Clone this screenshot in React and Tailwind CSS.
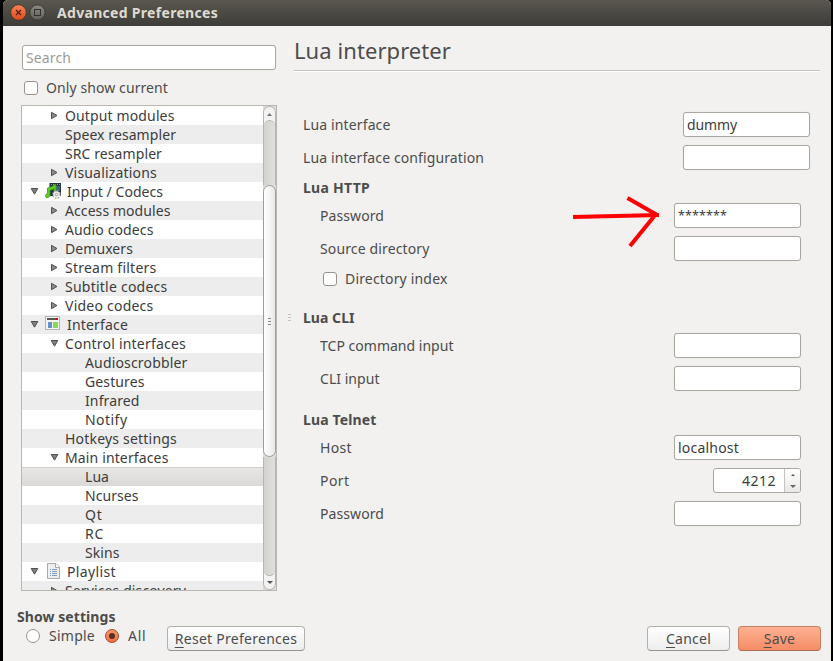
import { useLayoutEffect, useRef } from "react";

// Text label whose tracking is computed so that it fills the given width.
function T({ w, children, className = "" }) {
  const ref = useRef(null);
  useLayoutEffect(() => {
    const el = ref.current;
    el.style.letterSpacing = "0px";
    const natural = el.getBoundingClientRect().width;
    el.style.letterSpacing = `${(w - natural) / el.textContent.length}px`;
  }, [w]);
  return (
    <span ref={ref} className={`inline-block shrink-0 whitespace-pre ${className}`}>
      {children}
    </span>
  );
}

const rows = [
  [1, "right", "Output modules", 109.5],
  [1, "", "Speex resampler", 111],
  [1, "", "SRC resampler", 97],
  [1, "right", "Visualizations", 92],
  [0, "down", "Input / Codecs", 96, "codecs"],
  [1, "right", "Access modules", 105.5],
  [1, "right", "Audio codecs", 88.5],
  [1, "right", "Demuxers", 68],
  [1, "right", "Stream filters", 91.5],
  [1, "right", "Subtitle codecs", 102.5],
  [1, "right", "Video codecs", 88.5],
  [0, "down", "Interface", 61, "interface"],
  [1, "down", "Control interfaces", 121],
  [2, "", "Audioscrobbler", 102.5],
  [2, "", "Gestures", 59.5],
  [2, "", "Infrared", 54.5],
  [2, "", "Notify", 42.5],
  [1, "", "Hotkeys settings", 112],
  [1, "down", "Main interfaces", 103.5],
  [2, "", "Lua", 24],
  [2, "", "Ncurses", 53.5],
  [2, "", "Qt", 17.5],
  [2, "", "RC", 19],
  [2, "", "Skins", 34.5],
  [0, "down", "Playlist", 49, "playlist"],
  [1, "right", "Services discovery", 121],
];

function Arrow({ dir }) {
  return (
    <svg width="10" height="9" viewBox="0 0 10 9" className="shrink-0">
      {dir === "right" && <path d="M2.5 1.3 L8 4.5 L2.5 7.7 Z" fill="#8a8a88" stroke="#52524f" />}
      {dir === "down" && <path d="M2.2 1.5 H8.8 L5.5 7.2 Z" fill="#80807d" stroke="#50504d" />}
    </svg>
  );
}

function RowIcon({ name }) {
  if (name === "codecs")
    return (
      <svg width="16" height="16" viewBox="0 0 16 16">
        <rect x="4.5" y="0" width="11.5" height="13" fill="#26323d" />
        <path d="M6 1.500h9" stroke="#8f9fac" strokeDasharray="1 1" />
        <rect x="9" y="3" width="6" height="5" fill="#45618c" />
        <path d="M2.500 5 C5 4.500 8 3.500 9.500 1.500 H11 V11 H9 V5.500 C8 6.500 6.500 7 5 7.200 V12.500 C4.500 15 .6 15.500 .5 13.200 C.5 11.500 1.500 10.700 2.500 10.500Z" fill="#5fd01e" stroke="#3a9a13" strokeWidth=".8" />
        <circle cx="11.500" cy="11.500" r="3.600" fill="none" stroke="#9b9d98" strokeWidth="1.600" strokeDasharray="1.600 1.200" />
        <circle cx="11.500" cy="11.500" r="3.300" fill="#eeeeec" />
        <circle cx="11.500" cy="11.500" r="1.200" fill="#fff" stroke="#8d8f8a" strokeWidth=".9" />
      </svg>
    );
  if (name === "interface")
    return (
      <svg width="16" height="16" viewBox="0 0 16 16">
        <rect x=".5" y=".5" width="14" height="13" fill="#f3f3f1" stroke="#b5b6b1" />
        <path d="M2 3h9" stroke="#555753" strokeWidth="2" />
        <path d="M11 3h2" stroke="#e00" strokeWidth="2" />
        <path d="M3 7h4M3 9h4M3 11h4" stroke="#3a71b8" strokeWidth="1.300" />
        <path d="M8 7h5M8 9h5M8 11h5" stroke="#6bd01f" strokeWidth="1.400" />
      </svg>
    );
  return (
    <svg width="16" height="16" viewBox="0 0 16 16">
      <path d="M2.500 .5h8.500l3.500 3.500v11.500h-12z" fill="#eeeeec" stroke="#a9aaa6" />
      <path d="M10.500 .5v4h4" fill="#fff" stroke="#a9aaa6" />
      <path d="M5 6.500h1M5 8.500h1M5 10.500h1M5 12.500h1M7 6.500h5M7 8.500h5M7 10.500h5M7 12.500h5" stroke="#7d9cc4" />
    </svg>
  );
}

function TreeRow({ row, index }) {
  const [level, dir, label, width, icon] = row;
  const bg =
    label === "Lua"
      ? "bg-linear-to-b from-[#e9e8e7] to-[#dad9d7] shadow-[inset_0_1px_0_#d0cfcc]"
      : index % 2
        ? "bg-[#ededed]"
        : "bg-white";
  const pad = level === 0 ? "pl-[7px]" : level === 1 ? "pl-[27px]" : "pl-[47px]";
  return (
    <div className={`flex h-[19px] shrink-0 items-center ${bg} ${pad}`}>
      <Arrow dir={dir} />
      {icon && (
        <span className="mb-px ml-1.5 -mr-0.5 shrink-0">
          <RowIcon name={icon} />
        </span>
      )}
      <T w={width} className={icon ? "ml-2 text-[#3c3c3c]" : "ml-1.5 text-[#3c3c3c]"}>
        {label}
      </T>
    </div>
  );
}

function Grip({ className }) {
  return (
    <div className={`flex flex-col gap-[2px] ${className}`}>
      <i className="h-px w-[3px] bg-current" />
      <i className="h-px w-[3px] bg-current" />
      <i className="h-px w-[3px] bg-current" />
    </div>
  );
}

function ScrollBar() {
  return (
    <div className="flex w-[13px] flex-col bg-[#dddcda]">
      <div className="flex h-[79px] flex-col rounded-t-[7px] border border-b-0 border-[#b7b5b1] bg-linear-to-r from-[#d3d2cf] to-[#e0dfdd]">
        <div className="flex h-[18px] items-center justify-center rounded-t-[6px] bg-[#f3f2f1]">
          <svg width="5" height="3" className="mb-[3px]"><path d="M0 3 L2.500 0 L5 3Z" fill="#777" /></svg>
        </div>
        <div className="-mt-[5px] flex-1 rounded-t-[7px] border-t border-[#b7b5b1] bg-linear-to-r from-[#d3d2cf] to-[#e0dfdd]" />
      </div>
      <div className="flex h-[272px] items-center justify-center rounded-[7px] border border-[#9f9d99] bg-linear-to-r from-white to-[#e9e8e6]">
        <Grip className="text-[#8b8986]" />
      </div>
      <div className="flex flex-1 flex-col rounded-b-[7px] border border-t-0 border-[#b7b5b1] bg-[#f3f2f1]">
        <div className="flex-1 rounded-b-[7px] border-b border-[#b7b5b1] bg-linear-to-r from-[#d3d2cf] to-[#e0dfdd]" />
        <div className="flex h-[13px] items-center justify-center">
          <svg width="6" height="3"><path d="M0 0 L3 3 L6 0Z" fill="#555" /></svg>
        </div>
      </div>
    </div>
  );
}

function Field({ w, children, className = "" }) {
  return (
    <div className={`flex h-[25px] w-[127px] shrink-0 items-center rounded-[3px] border border-[#aaa7a1] bg-white pl-[3px] shadow-[0_0_1px_#d8d7d4] ${className}`}>
      {children && <T w={w}>{children}</T>}
    </div>
  );
}

function Check() {
  return <span className="h-[14px] w-[14px] shrink-0 rounded-[3px] border border-[#96948f] bg-white" />;
}

function Heading({ w, children, className = "" }) {
  return (
    <div className={`flex items-center pl-[9px] font-bold ${className}`}>
      <T w={w}>{children}</T>
    </div>
  );
}

function FormRow({ label, w, children, className = "pl-[26px] pr-[19px]" }) {
  return (
    <div className={`mb-2 flex h-[25px] items-center justify-between ${className}`}>
      <T w={w}>{label}</T>
      {children}
    </div>
  );
}

function Button({ first, rest, w, className }) {
  return (
    <button className={`flex h-[25px] items-center justify-center rounded-[4px] border pb-px ${className}`}>
      <T w={w}>
        <span className="underline decoration-1 underline-offset-[3px]">{first}</span>
        {rest}
      </T>
    </button>
  );
}

const plainButton = "border-[#b3b0aa] border-b-[#98958f] bg-linear-to-b from-white to-[#eeeded]";

export default function App() {
  return (
    <div className="flex h-[661px] w-[833px] overflow-hidden bg-black pr-[2px] pl-[3px] font-['Noto_Sans','Open_Sans',sans-serif] text-[14px] leading-[19px] text-[#4c4c4c]">
      <div className="flex flex-1 flex-col overflow-hidden rounded-t-[5px] bg-[#f2f1ef]">
        <header className="flex h-[26px] shrink-0 items-center bg-linear-to-b from-[#5a574e] to-[#3d3c38] pl-[7px]">
          <svg width="36" height="18" viewBox="0 0 36 18">
            <defs>
              <linearGradient id="close" x2="0" y2="1">
                <stop stopColor="#f78457" />
                <stop offset="1" stopColor="#df481b" />
              </linearGradient>
              <linearGradient id="max" x2="0" y2="1">
                <stop stopColor="#8b8980" />
                <stop offset="1" stopColor="#62605a" />
              </linearGradient>
            </defs>
            <circle cx="8.500" cy="8.500" r="7.800" fill="url(#close)" stroke="#34332e" strokeWidth=".8" />
            <path d="M6 6l5 5M11 6l-5 5" stroke="#4c2010" strokeWidth="1.200" />
            <circle cx="27.500" cy="8.500" r="7.600" fill="url(#max)" stroke="#34332e" strokeWidth=".8" />
            <rect x="24.500" y="5.500" width="6" height="6" fill="none" stroke="#33322e" />
          </svg>
          <T w={161} className="mb-[2px] ml-[11px] font-bold text-[#dfdbd2]">Advanced Preferences</T>
        </header>

        <main className="flex h-[565px] shrink-0">
          <section className="ml-[18px] flex w-[256px] shrink-0 flex-col pt-[19px]">
            <Field w={45} className="mx-px w-[254px] text-[#9c9a97]">
              Search
            </Field>
            <label className="mt-2 flex h-[20px] items-center gap-2 pl-[3px]">
              <Check />
              <T w={122} className="mb-[2px]">Only show current</T>
            </label>
            <div className="mt-[7px] flex h-[486px] overflow-hidden border border-[#b9b7b2] bg-white">
              <div className="flex flex-1 flex-col overflow-hidden">
                {rows.map((row, i) => (
                  <TreeRow key={row[2]} row={row} index={i} />
                ))}
              </div>
              <ScrollBar />
            </div>
          </section>

          <div className="flex w-[17px] shrink-0 justify-center pt-[288px] pl-[7px]">
            <Grip className="text-[#c5c3bf]" />
          </div>

          <section className="flex w-[526px] flex-col">
            <h1 className="flex h-[45px] shrink-0 items-center border-b border-[#c4c2be] pt-[3px] text-[22px] leading-[28px] shadow-[0_1px_0_white]">
              <T w={157}>Lua interpreter</T>
            </h1>
            <div className="pt-[41px]">
              <FormRow label="Lua interface" w={87.5} className="pr-[10px] pl-[9px]">
                <Field w={50} className="text-[#3c3c3c]">dummy</Field>
              </FormRow>
              <FormRow label="Lua interface configuration" w={181} className="pr-[10px] pl-[9px]">
                <Field />
              </FormRow>
              <Heading w={67} className="mb-[7px] h-[18px]">Lua HTTP</Heading>
              <FormRow label="Password" w={64}>
                <Field w={49} className="text-[12.5px] text-[#3c3c3c]">*******</Field>
              </FormRow>
              <FormRow label="Source directory" w={109.5}>
                <Field />
              </FormRow>
              <label className="flex h-[20px] items-center gap-2 pl-[29px]">
                <Check />
                <T w={102.5} className="mb-[2px]">Directory index</T>
              </label>
              <Heading w={51.5} className="mt-[18px] mb-[6px] h-[20px]">Lua CLI</Heading>
              <FormRow label="TCP command input" w={133.5}>
                <Field />
              </FormRow>
              <FormRow label="CLI input" w={59.5}>
                <Field />
              </FormRow>
              <Heading w={73.5} className="mt-[18px] mb-[6px] h-[20px]">Lua Telnet</Heading>
              <FormRow label="Host" w={32}>
                <Field w={61} className="text-[#3c3c3c]">localhost</Field>
              </FormRow>
              <FormRow label="Port" w={29.5}>
                <div className="flex h-[25px] w-[88px] overflow-hidden rounded-[3px] border border-[#aaa7a1] bg-white text-[#3c3c3c]">
                  <div className="flex flex-1 items-center justify-end pr-[8px]">
                    <T w={34}>4212</T>
                  </div>
                  <div className="flex w-[16px] flex-col items-center justify-between border-l border-[#c5c3bf] bg-linear-to-b from-white to-[#e9e8e6] pt-[5px] pb-[4px]">
                    <svg width="4" height="2"><path d="M0 2 L2 0 L4 2Z" fill="#555" /></svg>
                    <svg width="6" height="3"><path d="M0 0 L3 3 L6 0Z" fill="#666" /></svg>
                  </div>
                </div>
              </FormRow>
              <FormRow label="Password" w={64}>
                <Field />
              </FormRow>
            </div>
          </section>
        </main>

        <footer className="flex flex-1 pr-[10px] pl-[14px]">
          <div className="flex w-[150px] flex-col pt-[16px]">
            <T w={98.5} className="self-start font-bold">Show settings</T>
            <div className="flex h-[20px] items-center pl-[9px]">
              <span className="h-[14px] w-[14px] rounded-full border border-[#96948f] bg-white" />
              <T w={46} className="mb-px ml-[9px]">Simple</T>
              <span className="ml-[10px] flex h-[14px] w-[14px] items-center justify-center rounded-full border border-[#a5492b] bg-linear-to-b from-[#f9966d] to-[#ee6f43]">
                <i className="h-[6px] w-[6px] rounded-full bg-[#5a3022]" />
              </span>
              <T w={18.5} className="mb-px ml-[9px]">All</T>
            </div>
          </div>
          <div className="flex flex-1 pt-[35px]">
            <Button first="R" rest="eset Preferences" w={122.5} className={`w-[138px] ${plainButton}`} />
            <div className="flex-1" />
            <Button first="C" rest="ancel" w={45} className={`mr-2 w-[83px] ${plainButton}`} />
            <Button
              first="S"
              rest="ave"
              w={31.5}
              className="w-[83px] border-[#c38166] border-b-[#a96f59] bg-linear-to-b from-[#fdb193] to-[#f68c66]"
            />
          </div>
        </footer>
      </div>

      {/* Hand-drawn pointer over the password field */}
      <svg className="pointer-events-none absolute top-[190px] left-[565px]" width="100" height="64" viewBox="0 0 100 64" fill="none" stroke="#f00" strokeWidth="4">
        <path d="M8 27 L94 25M62.500 8 L93 25.500M65 56 L91 24" />
      </svg>
    </div>
  );
}
